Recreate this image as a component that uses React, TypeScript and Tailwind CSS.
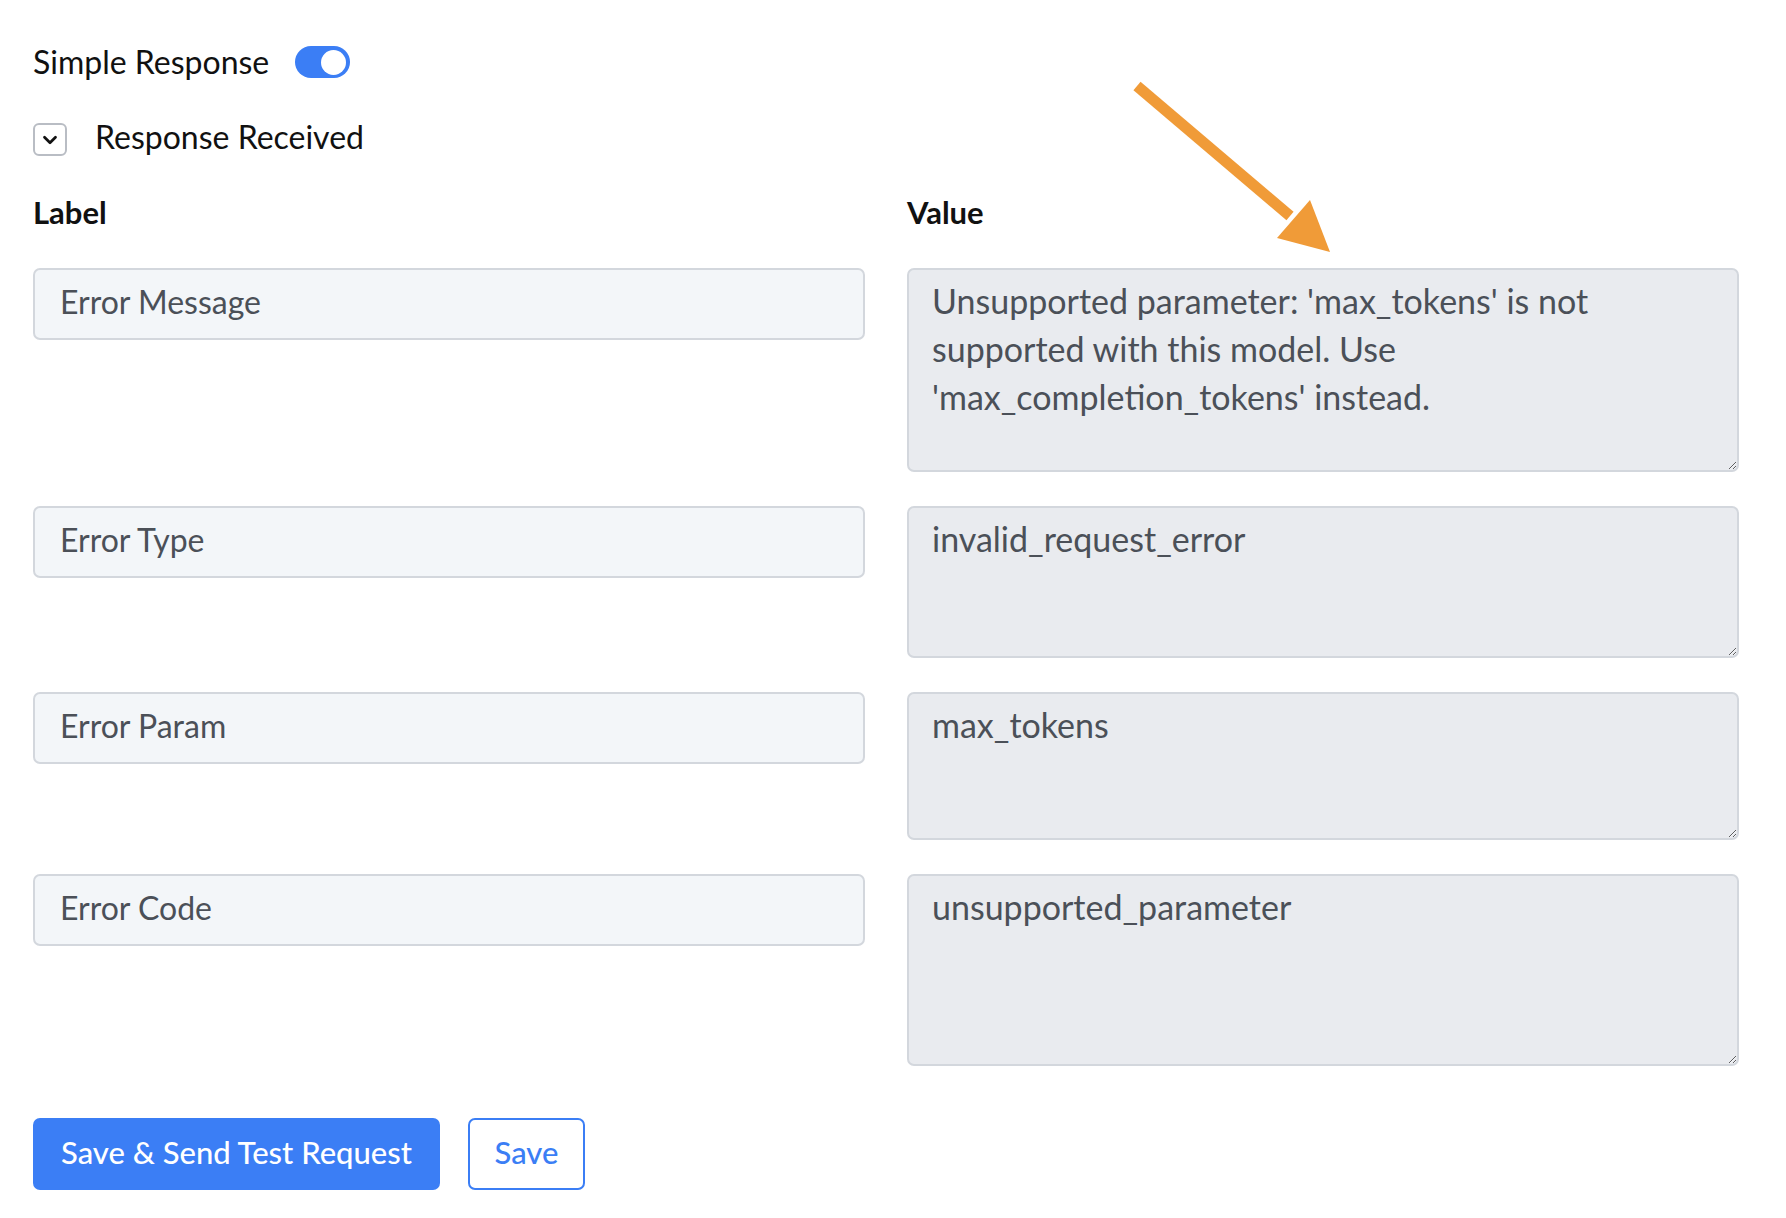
import { ChevronDown } from 'lucide-react';

const rows = [
  {
    label: 'Error Message',
    value: "Unsupported parameter: 'max_tokens' is not supported with this model. Use 'max_completion_tokens' instead.",
    h: 'h-[204px]',
  },
  { label: 'Error Type', value: 'invalid_request_error', h: 'h-[152px]' },
  { label: 'Error Param', value: 'max_tokens', h: 'h-[148px]' },
  { label: 'Error Code', value: 'unsupported_parameter', h: 'h-[192px]' },
];

function Toggle() {
  return (
    <div className="flex items-center justify-end w-[55px] h-[32px] rounded-full bg-[#3b7ef5] px-[4px]">
      <div className="w-[25px] h-[25px] rounded-full bg-white" />
    </div>
  );
}

export default function App() {
  return (
    <div className="relative min-h-screen bg-white pl-[33px] pt-[46px] font-['Lato','Liberation_Sans',sans-serif] text-[#111]">
      {/* Simple response */}
      <div className="flex items-center gap-[26px] h-[32px]">
        <span className="text-[32px] leading-[32px]">Simple Response</span>
        <Toggle />
      </div>

      {/* Response received */}
      <div className="flex items-center gap-[28px] h-[33px] mt-[45px]">
        <div className="flex items-center justify-center w-[34px] h-[33px] rounded-[6px] border-2 border-[#b9bdc4]">
          <ChevronDown className="w-[22px] h-[22px]" strokeWidth={3} />
        </div>
        <span className="text-[32px] leading-[32px] pb-[6px]">Response Received</span>
      </div>

      {/* Form */}
      <div className="w-[1706px] mt-[40px]">
        <div className="grid grid-cols-2 gap-x-[42px] h-[32px]">
          <span className="text-[31px] leading-[32px] font-bold">Label</span>
          <span className="text-[31px] leading-[32px] font-bold">Value</span>
        </div>

        <div className="grid grid-cols-2 gap-x-[42px] gap-y-[34px] mt-[40px] items-start">
          {rows.map((r) => (
            <div key={r.label} className="contents">
              <input
                readOnly
                defaultValue={r.label}
                className="w-full h-[72px] rounded-[7px] border-2 border-[#d3d7dd] bg-[#f3f6f9] px-[25px] pb-[5px] text-[32px] text-[#4b5058] outline-none"
              />
              <textarea
                readOnly
                defaultValue={r.value}
                className={`w-full ${r.h} rounded-[7px] border-2 border-[#d3d7dd] bg-[#e9ebef] px-[23px] pt-[7px] text-[34px] leading-[48px] text-[#4b5058] outline-none`}
              />
            </div>
          ))}
        </div>

        <div className="flex items-center gap-[28px] mt-[52px]">
          <button className="h-[72px] w-[407px] pb-[4px] rounded-[7px] bg-[#3b7ef5] text-white text-[31px] font-medium">
            Save &amp; Send Test Request
          </button>
          <button className="h-[72px] w-[117px] pb-[4px] rounded-[7px] border-2 border-[#3b7ef5] bg-white text-[#3b7ef5] text-[31px] font-medium">
            Save
          </button>
        </div>
      </div>

      {/* Annotation arrow */}
      <svg
        className="absolute left-[1120px] top-[70px] pointer-events-none"
        width="230"
        height="200"
        viewBox="1120 70 230 200"
      >
        <line x1="1137" y1="86" x2="1290" y2="216" stroke="#f09b38" strokeWidth="11" />
        <polygon points="1330,252 1277,238 1310,200" fill="#f09b38" />
      </svg>
    </div>
  );
}
